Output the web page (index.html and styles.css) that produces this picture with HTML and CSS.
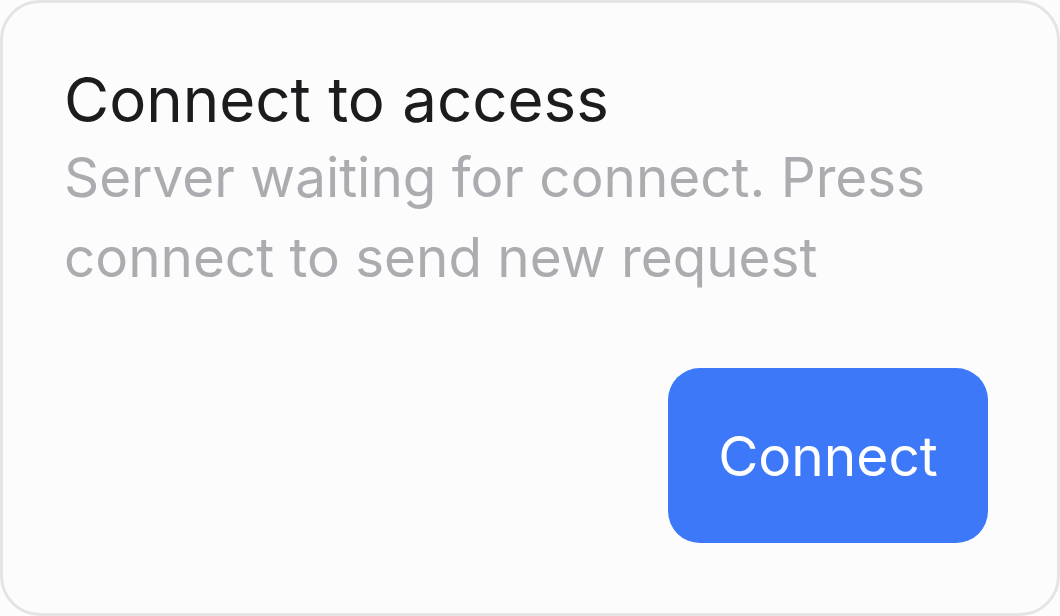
FILE: index.html
```html
<!DOCTYPE html>
<html>
<head>
<meta charset="utf-8">
<link rel="stylesheet" href="styles.css">
</head>
<body>
<div class="card">
  <h1 class="title">Connect to access</h1>
  <p class="desc">Server waiting for connect. Press connect to send new request</p>
  <div class="actions">
    <button class="btn">Connect</button>
  </div>
</div>
</body>
</html>
```
FILE: styles.css
```css
html, body {
  margin: 0;
  padding: 0;
  background: #fcfcfd;
}
.card {
  box-sizing: border-box;
  width: 1060px;
  height: 616px;
  border: 3px solid #e4e4e7;
  border-radius: 40px;
  background: #fcfcfd;
  padding: 59px 69px 70px 61px;
  display: flex;
  flex-direction: column;
  font-family: Inter, "Noto Sans", sans-serif;
}
.title {
  margin: 0;
  font-size: 61.8px;
  font-weight: 400;
  line-height: 75px;
  color: #1c1c1e;
}
.desc {
  margin: 0;
  font-size: 54.8px;
  line-height: 80px;
  color: #acacb0;
}
.actions {
  margin-top: auto;
  display: flex;
  justify-content: flex-end;
}
.btn {
  width: 320px;
  height: 175px;
  border: none;
  border-radius: 32px;
  background: #3c78f8;
  color: #ffffff;
  font-family: Inter, "Noto Sans", sans-serif;
  font-size: 55px;
  padding: 0;
}
```
